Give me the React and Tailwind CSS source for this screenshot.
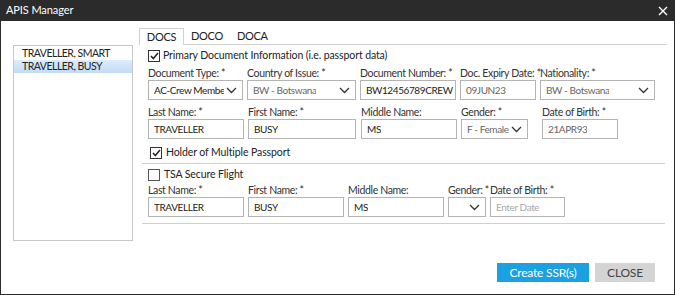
import React from 'react';

const Chevron = () => (
  <svg width="11" height="7" viewBox="0 0 11 7" className="shrink-0">
    <polyline points="1,1 5.5,5.5 10,1" fill="none" stroke="#333" strokeWidth="1.3" />
  </svg>
);

const Check = ({ checked }) => (
  <span className={`flex h-[12px] w-[12px] shrink-0 items-center justify-center border bg-white ${checked ? 'border-[#333]' : 'border-[#555]'}`}>
    {checked && (
      <svg width="9" height="8" viewBox="0 0 9 8">
        <polyline points="1,4 3.3,6.5 8,1" fill="none" stroke="#222" strokeWidth="1.5" />
      </svg>
    )}
  </span>
);

// label text and upper-case value text get slightly different tracking to mimic Segoe UI
const labelCls = 'h-[14px] whitespace-nowrap text-[10.5px] leading-[14px] tracking-[-0.35px] text-[#333]';
const valueCls = 'overflow-hidden whitespace-nowrap text-[10px] tracking-[-0.4px]';

const Field = ({ label, width, value, muted, placeholder }) => (
  <div className="flex flex-col" style={{ width }}>
    <div className={labelCls}>{label}</div>
    <div className="flex h-[20px] items-center border border-[#b4b4b4] bg-white pl-[5px] pr-[2px]">
      <span className={`${valueCls} ${muted ? 'text-[#666]' : placeholder ? 'text-[#aaa]' : 'text-[#222]'}`}>
        {value || placeholder}
      </span>
    </div>
  </div>
);

const Select = ({ label, width, value, muted }) => (
  <div className="flex flex-col" style={{ width }}>
    <div className={labelCls}>{label}</div>
    <div className="flex h-[20px] items-center justify-between gap-[2px] border border-[#b4b4b4] bg-white pl-[5px] pr-[5px]">
      <span className={`${valueCls} ${muted ? 'text-[#666]' : 'text-[#222]'}`}>{value}</span>
      <Chevron />
    </div>
  </div>
);

export default function App() {
  return (
    <div className="flex h-[295px] w-[675px] flex-col bg-[#2b2b2b] px-[1px] pb-[1px] font-['Lato',sans-serif]">
      <div className="flex h-[21px] items-center justify-between pl-[5px] pr-[6px] text-white">
        <span className="text-[11px] tracking-[-0.1px]">APIS Manager</span>
        <svg width="10" height="10" viewBox="0 0 10 10">
          <path d="M1 1 L9 9 M9 1 L1 9" stroke="#fff" strokeWidth="1.4" />
        </svg>
      </div>
      <div className="relative flex flex-1 bg-white">
        <div className="ml-[12px] mt-[24px] h-[196px] w-[120px] border border-[#c8c8c8] pt-[1px] text-[10.5px] tracking-[-0.5px] text-[#222]">
          <div className="h-[13px] pl-[8px] leading-[13px]">TRAVELLER, SMART</div>
          <div className="h-[13px] bg-gradient-to-b from-[#dcecfc] to-[#c1dcf6] pl-[8px] leading-[13px]">TRAVELLER, BUSY</div>
        </div>
        <div className="ml-[6px] mt-[7px] flex w-[528px] flex-col">
          <div className="flex h-[17px] items-end">
            <div className="flex h-[17px] w-[45px] items-center justify-center border-x border-t border-[#d0d0d0] bg-white text-[11px] tracking-[-0.3px] text-[#222]">DOCS</div>
            <div className="flex h-[16px] flex-1 items-center gap-[14px] border-b border-[#d0d0d0] pl-[7px] text-[11px] tracking-[-0.3px] text-[#222]">
              <span>DOCO</span>
              <span>DOCA</span>
            </div>
          </div>
          <div className="flex flex-col pl-[9px]">
            <div className="mt-[5px] flex h-[12px] items-center gap-[3px]">
              <Check checked />
              <span className="text-[10.5px] tracking-[-0.1px] text-[#222]">Primary Document Information (i.e. passport data)</span>
            </div>
            <div className="mt-[4px] flex gap-[4px]">
              <Select label="Document Type: *" width={95} value="AC-Crew Member" />
              <Select label="Country of Issue: *" width={109} value="BW - Botswana" muted />
              <Field label="Document Number: *" width={96} value="BW12456789CREW" />
              <Field label="Doc. Expiry Date: *" width={76} value="09JUN23" muted />
              <Select label="Nationality: *" width={115} value="BW - Botswana" muted />
            </div>
            <div className="mt-[5px] flex">
              <div className="w-[100px]"><Field label="Last Name: *" width={96} value="TRAVELLER" /></div>
              <div className="w-[113px]"><Field label="First Name: *" width={108} value="BUSY" /></div>
              <div className="w-[100px]"><Field label="Middle Name:" width={96} value="MS" /></div>
              <div className="w-[81px]"><Select label="Gender: *" width={67} value="F - Female" muted /></div>
              <Field label="Date of Birth: *" width={76} value="21APR93" muted />
            </div>
            <div className="mt-[8px] flex h-[12px] items-center gap-[4px] pl-[2px]">
              <Check checked />
              <span className="text-[10.5px] tracking-[-0.1px] text-[#222]">Holder of Multiple Passport</span>
            </div>
          </div>
          <div className="ml-[3px] mr-[2px] mt-[4px] h-px bg-[#d0d0d0]" />
          <div className="flex flex-col pl-[9px]">
            <div className="mt-[5px] flex h-[12px] items-center gap-[4px]">
              <Check />
              <span className="text-[10.5px] tracking-[-0.1px] text-[#222]">TSA Secure Flight</span>
            </div>
            <div className="mt-[2px] flex gap-[4px]">
              <Field label="Last Name: *" width={96} value="TRAVELLER" />
              <Field label="First Name: *" width={96} value="BUSY" />
              <Field label="Middle Name:" width={96} value="MS" />
              <Select label="Gender: *" width={38} value="" />
              <Field label="Date of Birth: *" width={75} placeholder="Enter Date" />
            </div>
          </div>
          <div className="ml-[3px] mr-[2px] mt-[6px] h-px bg-[#d0d0d0]" />
          <div className="mt-[39px] flex justify-end gap-[6px] pr-[12px]">
            <button className="h-[19px] w-[92px] bg-[#1ba1e2] text-[12px] tracking-[-0.2px] text-white">Create SSR(s)</button>
            <button className="h-[19px] w-[60px] bg-[#d4d4d4] text-[12px] tracking-[-0.2px] text-[#444]">CLOSE</button>
          </div>
        </div>
      </div>
    </div>
  );
}
